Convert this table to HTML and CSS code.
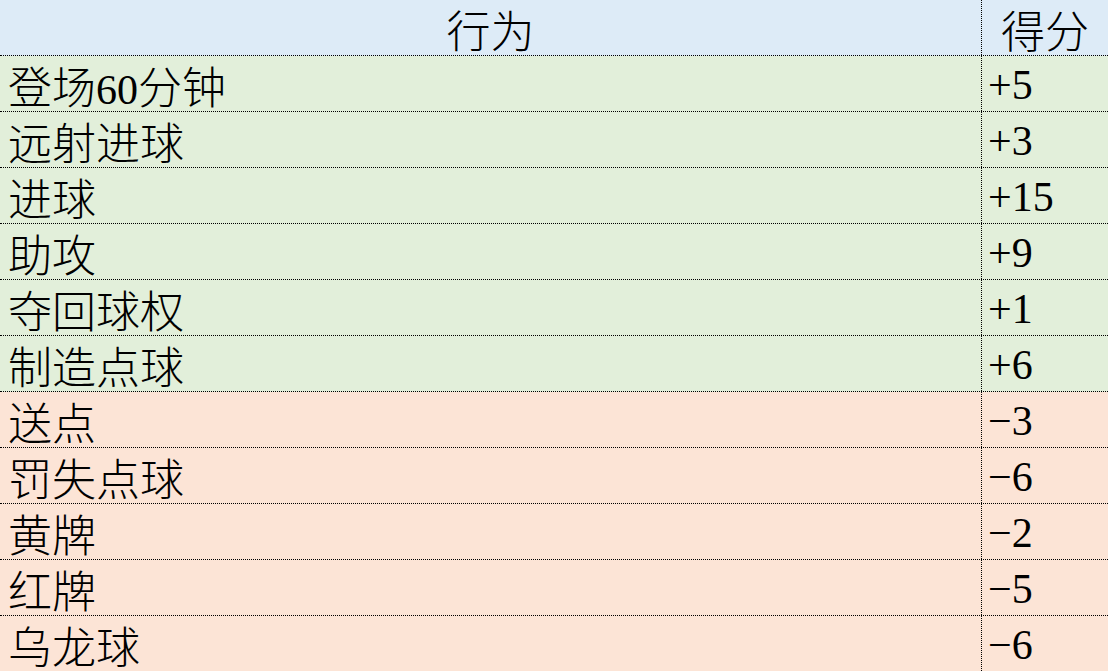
FILE: index.html
```html
<!DOCTYPE html>
<html lang="zh-CN">
<head>
<meta charset="utf-8">
<title>得分表</title>
<link rel="stylesheet" href="styles.css">
</head>
<body>
<div class="sheet">
  <div class="row head"><div class="c name">行为</div><div class="c score">得分</div></div>
  <div class="row good"><div class="c name">登场<span class="num">60</span>分钟</div><div class="c val">+5</div></div>
  <div class="row good"><div class="c name">远射进球</div><div class="c val">+3</div></div>
  <div class="row good"><div class="c name">进球</div><div class="c val">+15</div></div>
  <div class="row good"><div class="c name">助攻</div><div class="c val">+9</div></div>
  <div class="row good"><div class="c name">夺回球权</div><div class="c val">+1</div></div>
  <div class="row good"><div class="c name">制造点球</div><div class="c val">+6</div></div>
  <div class="row bad"><div class="c name">送点</div><div class="c val">−3</div></div>
  <div class="row bad"><div class="c name">罚失点球</div><div class="c val">−6</div></div>
  <div class="row bad"><div class="c name">黄牌</div><div class="c val">−2</div></div>
  <div class="row bad"><div class="c name">红牌</div><div class="c val">−5</div></div>
  <div class="row bad"><div class="c name">乌龙球</div><div class="c val">−6</div></div>
</div>
</body>
</html>
```
FILE: styles.css
```css
html, body {
  margin: 0;
  padding: 0;
  background: #fce4d6;
}
body {
  font-family: "Liberation Serif", "Noto Sans CJK SC", serif;
  font-size: 42px;
  color: #000;
  overflow: hidden;
}
.sheet {
  display: flex;
  flex-direction: column;
  width: 1108px;
}
.row {
  display: grid;
  grid-template-columns: 982px 1fr;
  height: 56px;
  box-sizing: border-box;
  border-bottom: 1px dotted #000;
}
.head { background: #ddebf7; }
.good { background: #e2efda; }
.bad { background: #fce4d6; }
.c {
  box-sizing: border-box;
  height: 55px;
  padding-top: 4px;
  line-height: 51px;
  white-space: nowrap;
}
.name {
  border-right: 1px dotted #000;
  padding-left: 8px;
  font-family: "Noto Sans CJK SC", sans-serif;
  font-size: 44px;
  font-weight: 300;
}
.num {
  font-family: "Liberation Serif", serif;
  font-size: 42px;
  font-weight: 400;
}
.head .name {
  text-align: center;
  padding-left: 0;
}
.score {
  text-align: center;
  font-family: "Noto Sans CJK SC", sans-serif;
  font-size: 44px;
  font-weight: 300;
}
.val {
  padding-left: 6px;
}
```
